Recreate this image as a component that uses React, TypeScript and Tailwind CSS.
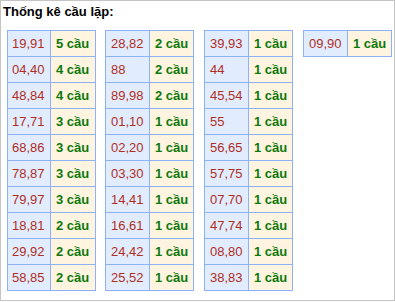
type Pair = [string, number];

const columns: Pair[][] = [
  [
    ["19,91", 5],
    ["04,40", 4],
    ["48,84", 4],
    ["17,71", 3],
    ["68,86", 3],
    ["78,87", 3],
    ["79,97", 3],
    ["18,81", 2],
    ["29,92", 2],
    ["58,85", 2],
  ],
  [
    ["28,82", 2],
    ["88", 2],
    ["89,98", 2],
    ["01,10", 1],
    ["02,20", 1],
    ["03,30", 1],
    ["14,41", 1],
    ["16,61", 1],
    ["24,42", 1],
    ["25,52", 1],
  ],
  [
    ["39,93", 1],
    ["44", 1],
    ["45,54", 1],
    ["55", 1],
    ["56,65", 1],
    ["57,75", 1],
    ["07,70", 1],
    ["47,74", 1],
    ["08,80", 1],
    ["38,83", 1],
  ],
  [["09,90", 1]],
];

function PairTable({ rows, first }: { rows: Pair[]; first: boolean }) {
  return (
    <div className="w-[89px] border-l border-t border-[#8db2f4]">
      {rows.map(([pair, count]) => (
        <div key={pair} className="flex h-[26px]">
          <div
            className={
              first
                ? "flex w-[43px] items-center border-b border-r border-[#8db2f4] bg-[#e1edff] pl-[4px] text-[#b02e1e]"
                : "flex w-[44px] items-center border-b border-r border-[#8db2f4] bg-[#e1edff] pl-[5px] text-[#b02e1e]"
            }
          >
            {pair}
          </div>
          <div className="flex flex-1 items-center border-b border-r border-[#8db2f4] bg-[#fff4e0] pl-[5px] font-bold text-[#0e780b]">
            {count} cầu
          </div>
        </div>
      ))}
    </div>
  );
}

export default function App() {
  return (
    <div
      className="h-[301px] w-[395px] border border-[#c4c4c4] bg-white pl-[2px] pt-[3px] text-[13px] leading-[15px]"
      style={{ fontFamily: '"Liberation Sans", Arial, sans-serif' }}
    >
      <div className="font-bold text-black">Thống kê cầu lặp:</div>
      <div className="mt-[11px] flex items-start pl-[4px]">
        {columns.map((rows, i) => (
          <div key={i} className={i === 0 ? "mr-[9px]" : "mr-[10px]"}>
            <PairTable rows={rows} first={i === 0} />
          </div>
        ))}
      </div>
    </div>
  );
}
